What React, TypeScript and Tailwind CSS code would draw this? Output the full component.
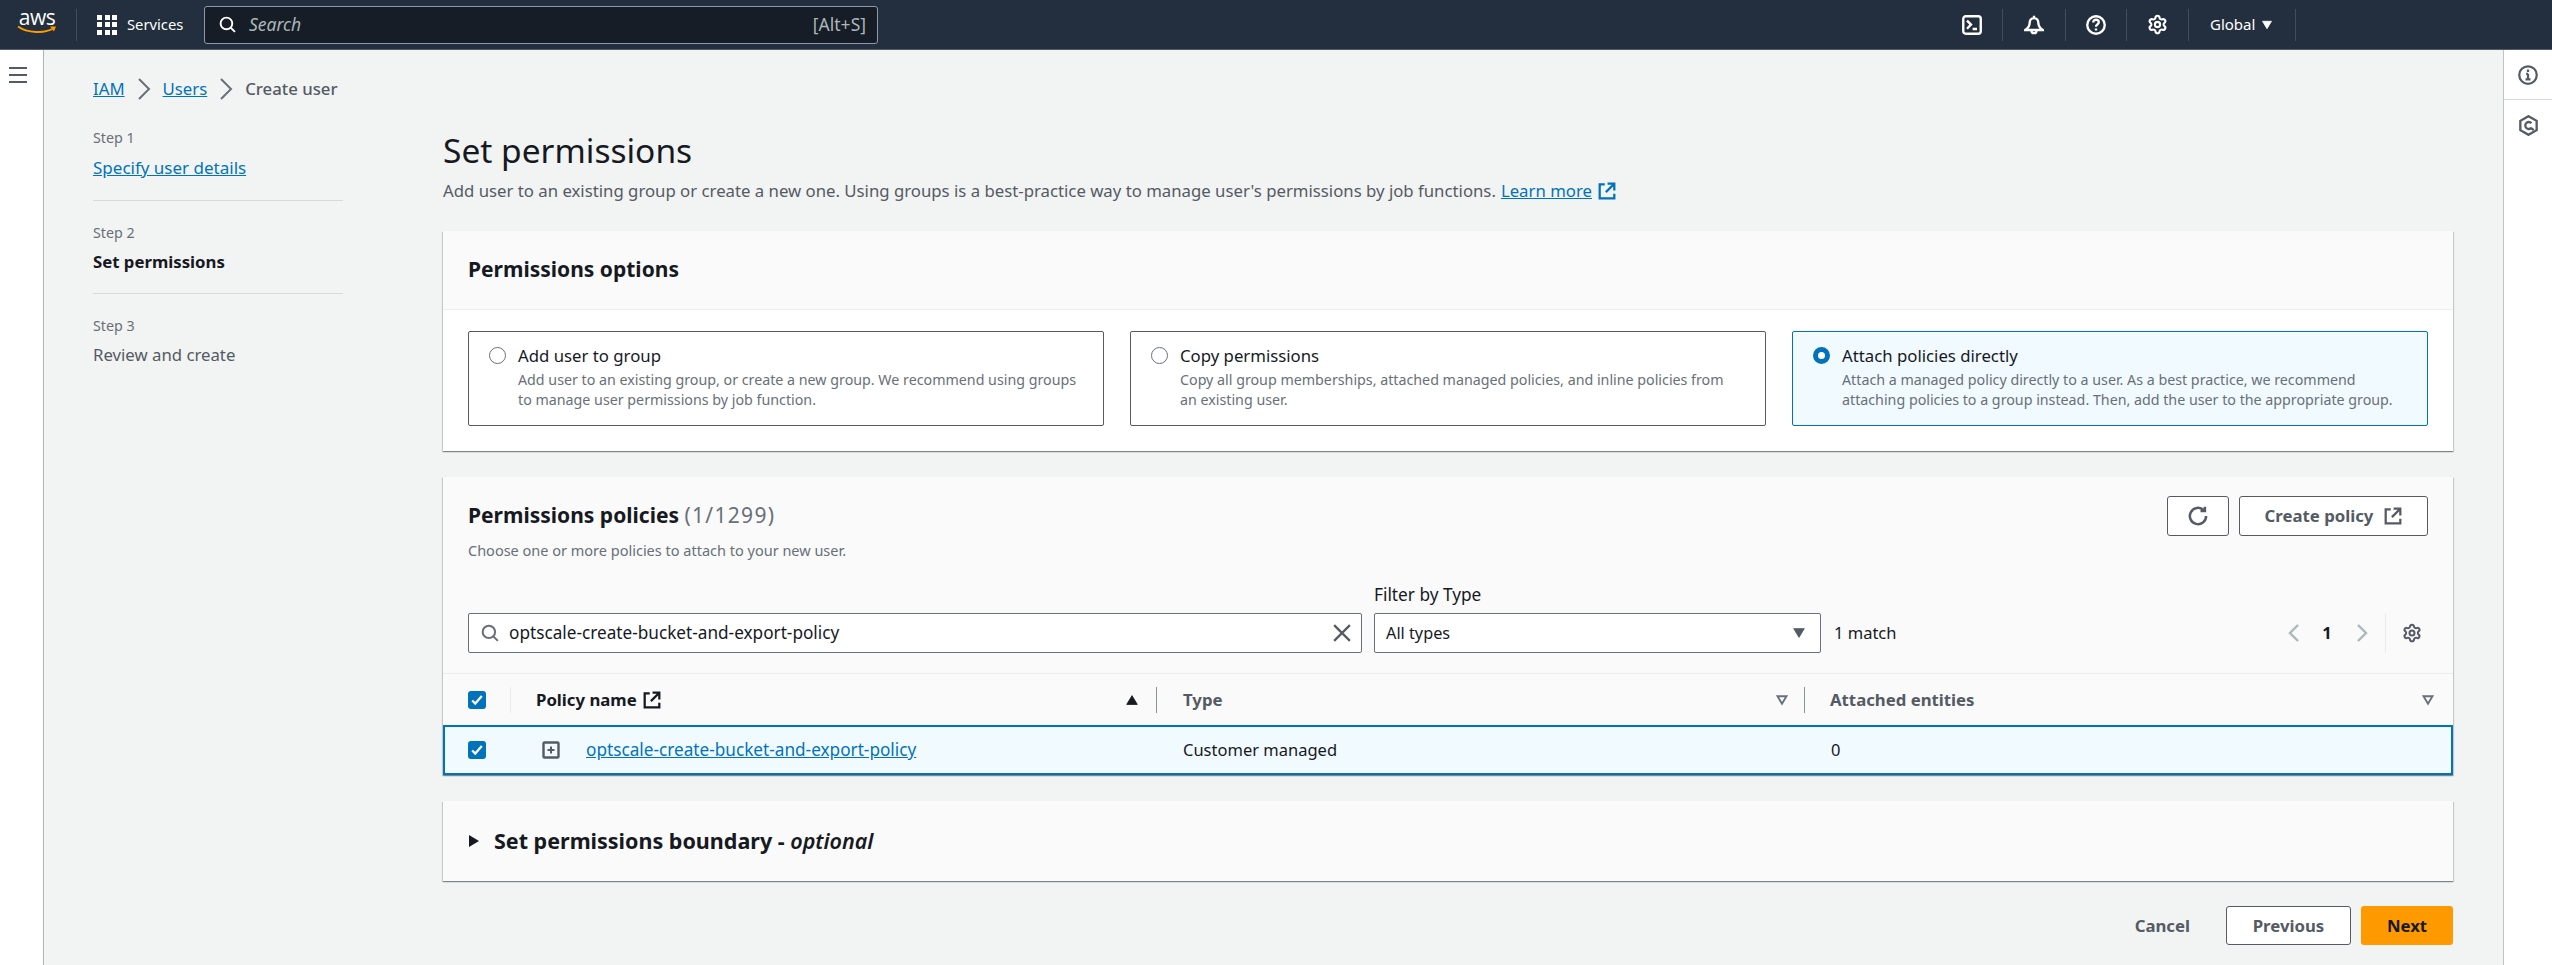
import React from 'react';
import { Settings } from 'lucide-react';

function ExternalIcon({ className }: { className?: string }) {
  return (
    <svg viewBox="0 0 16 16" fill="none" stroke="currentColor" strokeWidth="2" className={className}>
      <path d="M14.500 7.500V1.500H8.500M14.500 1.500 7 9M6 2H1.500v12.500h13V10.500" />
    </svg>
  );
}

function SearchIcon({ className }: { className?: string }) {
  return (
    <svg viewBox="0 0 16 16" fill="none" stroke="currentColor" strokeWidth="1.8" className={className}>
      <circle cx="7" cy="7" r="5.500" />
      <path d="m11 11 4 4" />
    </svg>
  );
}

function Caret({ up, outline, className }: { up?: boolean; outline?: boolean; className?: string }) {
  return (
    <svg viewBox="0 0 16 16" className={className}>
      <path
        d={up ? 'M8 3 14 13H2z' : 'M8 13 2 3h12z'}
        fill={outline ? 'none' : 'currentColor'}
        stroke="currentColor"
        strokeWidth={outline ? 2.5 : 1}
      />
    </svg>
  );
}

function Check() {
  return (
    <span className="w-[18px] h-[18px] rounded-[3px] bg-[#0073bb] flex items-center justify-center">
      <svg viewBox="0 0 16 16" fill="none" stroke="white" strokeWidth="2.6" className="w-[14px] h-[14px]">
        <path d="m2.500 8.500 3.500 3.500L13.500 3.500" />
      </svg>
    </span>
  );
}

function Radio({ checked }: { checked?: boolean }) {
  return checked ? (
    <span className="w-[17px] h-[17px] shrink-0 rounded-full border-[5px] border-[#0073bb] bg-white mt-[5px]" />
  ) : (
    <span className="w-[17px] h-[17px] shrink-0 rounded-full border-[1.5px] border-[#687078] bg-white mt-[5px]" />
  );
}

function TopIcon({ className, children }: { className: string; children: React.ReactNode }) {
  return <div className={className + ' h-[32px] border-r border-[#414d5c] flex items-center justify-center text-white'}>{children}</div>;
}

function TopBar() {
  return (
    <header className="h-[50px] bg-[#232f3e] border-b border-[#545b64] flex items-center shrink-0 text-white">
      <div className="w-[77px] h-[32px] flex flex-col items-center justify-center border-r border-[#414d5c] relative pr-[2px]">
        <span className="text-[21px] leading-[18px] font-normal tracking-[-0.5px] font-['Open_Sans',sans-serif] mt-[-7px]">aws</span>
        <svg viewBox="0 0 40 10" className="w-[40px] h-[10px] mt-[-1px]">
          <path d="M1 1.500C10 8 28 9 37 3" fill="none" stroke="#ff9900" strokeWidth="2" />
          <path d="M33 1.500h6l-2 5z" fill="#ff9900" />
        </svg>
      </div>
      <div className="flex items-center pl-[20px] w-[127px]">
        <div className="grid grid-cols-3 gap-[2.5px] w-[20px]">
          {Array.from({ length: 9 }).map((_, i) => (
            <span key={i} className="w-[5px] h-[5px] bg-white" />
          ))}
        </div>
        <span className="ml-[10px] text-[14.75px]">Services</span>
      </div>
      <div className="w-[674px] h-[38px] bg-[#161d26] border border-[#8d99a8] rounded-[3px] flex items-center pl-[14px] pr-[11px] text-[#aab7b8]">
        <SearchIcon className="w-[17px] h-[17px] text-white" />
        <span className="ml-[13px] italic text-[17.5px] flex-1">Search</span>
        <span className="text-[17.5px]">[Alt+S]</span>
      </div>
      <div className="flex-1" />
      <div className="flex items-center mr-[256px]">
        <TopIcon className="w-[61px]">
          <svg viewBox="0 0 16 16" fill="none" stroke="currentColor" strokeWidth="1.9" className="w-[20px] h-[20px]">
            <rect x="1" y="1" width="14" height="14" rx="2" />
            <path d="m4 4.500 3.200 3.200L4 11M8.500 11.200h3.500" />
          </svg>
        </TopIcon>
        <TopIcon className="w-[63px]">
          <svg viewBox="0 0 16 16" fill="none" stroke="currentColor" strokeWidth="1.9" className="w-[20px] h-[20px]">
            <path d="M8 .5v2M8 2.500c-2.200 0-3.500 1.800-3.500 4 0 2-1.500 4-3.500 5.500h14c-2-1.500-3.500-3.500-3.500-5.500 0-2.200-1.300-4-3.500-4z" />
            <path d="M6 12.500a2 2 0 0 0 4 0" />
          </svg>
        </TopIcon>
        <TopIcon className="w-[61px]">
          <svg viewBox="0 0 16 16" fill="none" stroke="currentColor" strokeWidth="1.9" className="w-[20px] h-[20px]">
            <circle cx="8" cy="8" r="7" />
            <path d="M5.800 6c0-1.400 1-2.200 2.200-2.200s2.200.8 2.200 2c0 1.600-2.200 1.800-2.200 3.600M8 10.800v1.600" />
          </svg>
        </TopIcon>
        <TopIcon className="w-[62px]">
          <Settings className="w-[21px] h-[21px]" strokeWidth={2.4} />
        </TopIcon>
        <div className="w-[107px] h-[32px] border-r border-[#414d5c] flex items-center pl-[21px] text-[15px]">
          Global
          <Caret className="w-[12px] h-[12px] ml-[6px]" />
        </div>
      </div>
    </header>
  );
}

function Step({ label, children, last }: { label: string; children: React.ReactNode; last?: boolean }) {
  return (
    <div className={last ? 'pt-[22px]' : 'pt-[22px] pb-[20px] border-b border-[#d5dbdb]'}>
      <div className="text-[14.25px] leading-[20px] text-[#687078] mb-[8px]">{label}</div>
      {children}
    </div>
  );
}

function Tile({ title, lines, checked }: { title: string; lines: string[]; checked?: boolean }) {
  return (
    <div
      className={
        'h-[95px] rounded-[2px] border flex gap-[9px] px-[20px] pt-[10px] ' +
        (checked ? 'bg-[#f1faff] border-[#0073bb]' : 'bg-white border-[#545b64]')
      }
    >
      <Radio checked={checked} />
      <div className="pl-[3px] whitespace-nowrap">
        <div className="text-[16.75px] leading-[28px] text-[#16191f]">{title}</div>
        {lines.map((l) => (
          <div key={l} className="text-[14.25px] leading-[20px] text-[#687078]">{l}</div>
        ))}
      </div>
    </div>
  );
}

const tableCols = 'grid grid-cols-[68px_646px_648px_1fr]';
const cardShadow = 'shadow-[0_1px_1px_0_rgba(0,28,36,0.3),1px_1px_1px_0_rgba(0,28,36,0.15),-1px_1px_1px_0_rgba(0,28,36,0.15)]';

function PolicyTable() {
  return (
    <div>
      <div className={tableCols + ' h-[52px] border-t border-[#eaeded] items-center text-[16.75px] font-bold'}>
        <div className="pl-[25px] h-[26px] flex items-center border-r border-[#eaeded]">
          <Check />
        </div>
        <div className="pl-[25px] pr-[15px] h-[26px] flex items-center border-r border-[#879596] text-[#16191f]">
          Policy name
          <ExternalIcon className="w-[18px] h-[18px] ml-[6px]" />
          <Caret up className="w-[14px] h-[14px] ml-auto mr-[2px]" />
        </div>
        <div className="pl-[26px] pr-[16px] h-[26px] flex items-center border-r border-[#879596] text-[#545b64]">
          Type
          <Caret outline className="w-[12px] h-[12px] ml-auto text-[#687078]" />
        </div>
        <div className="pl-[25px] pr-[19px] h-[26px] flex items-center text-[#545b64]">
          Attached entities
          <Caret outline className="w-[12px] h-[12px] ml-auto text-[#687078]" />
        </div>
      </div>
      <div className={tableCols + ' h-[50px] border-2 border-[#0073bb] bg-[#f1faff] items-center text-[16.5px] text-[#16191f]'}>
        <div className="pl-[23px] flex items-center">
          <Check />
        </div>
        <div className="pl-[29px] flex items-center">
          <svg viewBox="0 0 18 18" fill="none" stroke="#545b64" strokeWidth="2.4" className="w-[18px] h-[18px]">
            <rect x="1.500" y="1.500" width="15" height="15" rx="1" />
            <path d="M9 5.500v7M5.500 9h7" strokeWidth="2" />
          </svg>
          <a className="ml-[26px] text-[17.2px] text-[#0073bb] underline">optscale-create-bucket-and-export-policy</a>
        </div>
        <div className="pl-[24px]">Customer managed</div>
        <div className="pl-[24px]">0</div>
      </div>
    </div>
  );
}

export default function App() {
  return (
    <div className="h-[965px] overflow-hidden flex flex-col bg-[#f2f3f3] font-['Noto_Sans',sans-serif] text-[#16191f]">
      <TopBar />
      <div className="flex flex-1 min-h-0">
        <aside className="w-[44px] bg-white border-r border-[#aab7b8] pt-[17px] pl-[9px] shrink-0">
          <svg viewBox="0 0 18 16" stroke="#545b64" strokeWidth="2" className="w-[18px] h-[16px]">
            <path d="M0 1h18M0 8h18M0 15h18" />
          </svg>
        </aside>
        <div className="w-[399px] shrink-0 pl-[49px] pr-[100px]">
          <div className="h-[56px] pt-[22px] flex items-center text-[16.75px] leading-[22px] whitespace-nowrap">
            <a className="text-[#0073bb] underline">IAM</a>
            <svg viewBox="0 0 14 22" fill="none" stroke="#687078" strokeWidth="2" className="w-[14px] h-[22px] mx-[12px] shrink-0">
              <path d="m2 1 10 10L2 21" />
            </svg>
            <a className="text-[#0073bb] underline">Users</a>
            <svg viewBox="0 0 14 22" fill="none" stroke="#687078" strokeWidth="2" className="w-[14px] h-[22px] mx-[12px] shrink-0">
              <path d="m2 1 10 10L2 21" />
            </svg>
            <span className="text-[#545b64] font-medium">Create user</span>
          </div>
          <Step label="Step 1">
            <a className="text-[17px] leading-[22px] text-[#0073bb] underline">Specify user details</a>
          </Step>
          <Step label="Step 2">
            <div className="text-[16.75px] leading-[22px] font-bold">Set permissions</div>
          </Step>
          <Step label="Step 3" last>
            <div className="text-[16.75px] leading-[22px] text-[#545b64]">Review and create</div>
          </Step>
        </div>
        <main className="w-[2010px] shrink-0 pt-[78px]">
          <h1 className="text-[33.5px] leading-[44px] font-normal">Set permissions</h1>
          <p className="text-[16.75px] leading-[24px] text-[#545b64] mt-[7px] flex items-center">
            Add user to an existing group or create a new one. Using groups is a best-practice way to manage user's permissions by job functions.
            <a className="ml-[5px] text-[#0073bb] underline">Learn more</a>
            <ExternalIcon className="w-[18px] h-[18px] ml-[6px] text-[#0073bb]" />
          </p>
          <section className={'mt-[28px] h-[220px] bg-white ' + cardShadow}>
            <div className="h-[79px] bg-[#fafafa] border-b border-[#eaeded] px-[25px] flex items-center">
              <h2 className="text-[21px] font-bold">Permissions options</h2>
            </div>
            <div className="grid grid-cols-3 gap-[26px] px-[25px] pt-[21px]">
              <Tile title="Add user to group" lines={['Add user to an existing group, or create a new group. We recommend using groups', 'to manage user permissions by job function.']} />
              <Tile title="Copy permissions" lines={['Copy all group memberships, attached managed policies, and inline policies from', 'an existing user.']} />
              <Tile checked title="Attach policies directly" lines={['Attach a managed policy directly to a user. As a best practice, we recommend', 'attaching policies to a group instead. Then, add the user to the appropriate group.']} />
            </div>
          </section>
          <section className={'mt-[26px] h-[298px] bg-[#fafafa] ' + cardShadow}>
            <div className="px-[25px] h-[196px]">
              <div className="flex justify-between pt-[19px]">
                <div className="pt-[6px]">
                  <h2 className="text-[21px] leading-[26px] font-bold">
                    Permissions policies <span className="font-normal tracking-[1.3px] text-[#687078]">(1/1299)</span>
                  </h2>
                  <p className="text-[14.5px] leading-[20px] text-[#687078] mt-[12px]">Choose one or more policies to attach to your new user.</p>
                </div>
                <div className="flex gap-[10px]">
                  <button className="w-[62px] h-[40px] border border-[#545b64] rounded-[3px] bg-white flex items-center justify-center text-[#545b64]">
                    <svg viewBox="0 0 16 16" fill="none" stroke="currentColor" strokeWidth="2" className="w-[20px] h-[20px]">
                      <path d="M14.500 8a6.500 6.500 0 1 1-2-4.700M13.500 .5v3.500H10" />
                    </svg>
                  </button>
                  <button className="w-[189px] h-[40px] border border-[#545b64] rounded-[3px] bg-white flex items-center justify-center text-[16.75px] font-bold text-[#545b64]">
                    Create policy
                    <ExternalIcon className="w-[18px] h-[18px] ml-[11px]" />
                  </button>
                </div>
              </div>
              <div className="flex items-end mt-[25px]">
                <div className="w-[894px] h-[40px] border border-[#687078] rounded-[2px] bg-white flex items-center pl-[12px] pr-[10px]">
                  <SearchIcon className="w-[18px] h-[18px] text-[#687078]" />
                  <span className="ml-[10px] text-[17.2px] flex-1">optscale-create-bucket-and-export-policy</span>
                  <svg viewBox="0 0 16 16" fill="none" stroke="#545b64" strokeWidth="2" className="w-[18px] h-[18px]">
                    <path d="m1 1 14 14M15 1 1 15" />
                  </svg>
                </div>
                <div className="ml-[12px]">
                  <div className="text-[17.25px] leading-[20px] mb-[8px] text-[#16191f]">Filter by Type</div>
                  <div className="w-[447px] h-[40px] border border-[#687078] rounded-[2px] bg-white flex items-center justify-between px-[11px] text-[16.25px]">
                    All types
                    <Caret className="w-[14px] h-[14px] text-[#545b64] mr-[3px]" />
                  </div>
                </div>
                <span className="ml-[13px] text-[16.5px] h-[40px] flex items-center">1 match</span>
                <div className="flex-1" />
                <div className="flex items-center h-[40px] pr-[6px] text-[#16191f]">
                  <svg viewBox="0 0 11 18" fill="none" stroke="#aab7b8" strokeWidth="2.4" className="w-[11px] h-[18px]">
                    <path d="M10 1 2 9l8 8" />
                  </svg>
                  <span className="ml-[24px] mr-[26px] w-[8px] text-[16.5px] font-bold flex justify-center">1</span>
                  <svg viewBox="0 0 11 18" fill="none" stroke="#aab7b8" strokeWidth="2.4" className="w-[11px] h-[18px]">
                    <path d="m1 1 8 8-8 8" />
                  </svg>
                  <div className="h-[40px] border-l border-[#eaeded] ml-[17px] pl-[16px] flex items-center">
                    <Settings className="w-[20px] h-[20px] text-[#545b64]" strokeWidth={2.4} />
                  </div>
                </div>
              </div>
            </div>
            <PolicyTable />
          </section>
          <section className={'mt-[26px] h-[80px] bg-[#fafafa] px-[25px] flex items-center ' + cardShadow}>
            <svg viewBox="0 0 12 14" className="w-[12px] h-[14px] mr-[14px]">
              <path d="M1 1l10 6-10 6z" fill="#16191f" />
            </svg>
            <h2 className="text-[21.5px] font-bold">
              Set permissions boundary - <span className="italic font-semibold">optional</span>
            </h2>
          </section>
          <div className="flex justify-end items-center mt-[25px] text-[16.75px] font-bold">
            <span className="text-[#545b64] mr-[36px]">Cancel</span>
            <button className="w-[125px] h-[39px] border border-[#545b64] rounded-[3px] bg-white text-[#545b64]">Previous</button>
            <button className="w-[92px] h-[39px] ml-[10px] rounded-[3px] bg-[#ff9900] text-[#16191f]">Next</button>
          </div>
        </main>
        <div className="flex-1" />
        <aside className="w-[49px] bg-white border-l border-[#bcc5c5] shrink-0 flex flex-col items-center">
          <div className="h-[50px] w-full border-b border-[#d5dbdb] flex items-center justify-center">
            <svg viewBox="0 0 16 16" fill="none" stroke="#545b64" strokeWidth="1.8" className="w-[20px] h-[20px]">
              <circle cx="8" cy="8" r="7" />
              <path d="M8 7v4.500M6 11.500h4M6.500 7H8M8 3.500v2" />
            </svg>
          </div>
          <div className="h-[50px] w-full flex items-center justify-center">
            <svg viewBox="0 0 16 18" fill="none" stroke="#545b64" strokeWidth="2" className="w-[19px] h-[21px]">
              <path d="M8 1 15 5v8l-7 4-7-4V5z" />
              <path d="M10.500 11a3 3 0 1 1 0-4" />
              <path d="M10 11 12.500 13" />
            </svg>
          </div>
        </aside>
      </div>
    </div>
  );
}
